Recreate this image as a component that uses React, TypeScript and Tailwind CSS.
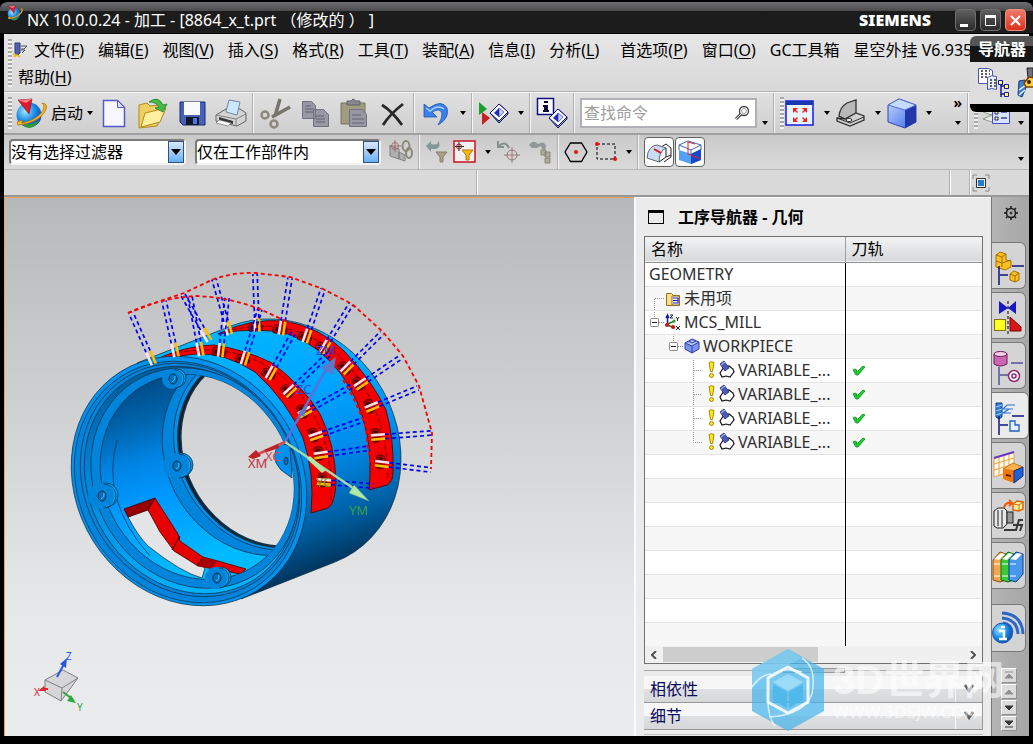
import type { ReactNode } from 'react';

const MENUS: { label: string; hotkey?: string; spaced?: boolean }[] = [
  { label: '文件', hotkey: 'F' },
  { label: '编辑', hotkey: 'E' },
  { label: '视图', hotkey: 'V' },
  { label: '插入', hotkey: 'S' },
  { label: '格式', hotkey: 'R' },
  { label: '工具', hotkey: 'T' },
  { label: '装配', hotkey: 'A' },
  { label: '信息', hotkey: 'I' },
  { label: '分析', hotkey: 'L' },
  { label: '首选项', hotkey: 'P', spaced: true },
  { label: '窗口', hotkey: 'O' },
  { label: 'GC工具箱' },
  { label: '星空外挂 V6.935' },
];

function MenuItem({ label, hotkey, spaced }: { label: string; hotkey?: string; spaced?: boolean }) {
  return (
    <button type="button" className={spaced ? 'ml-[7px] shrink-0 whitespace-nowrap' : 'shrink-0 whitespace-nowrap'}>
      {label}
      {hotkey && (
        <>
          (<span className="underline underline-offset-2">{hotkey}</span>)
        </>
      )}
    </button>
  );
}

/* ---------- small toolbar parts ---------- */

function Grip({ tall }: { tall?: boolean }) {
  return (
    <span
      className={
        tall
          ? 'h-12 w-1 shrink-0 bg-[repeating-linear-gradient(to_bottom,#a8a8a8_0_2px,#f2f2f2_2px_4px)]'
          : 'h-8 w-1 shrink-0 bg-[repeating-linear-gradient(to_bottom,#a8a8a8_0_2px,#f2f2f2_2px_4px)]'
      }
    />
  );
}

function Sep() {
  return <span className="mx-[5px] w-[2px] shrink-0 self-stretch border-l border-[#b0b0b0] bg-[#f6f6f6]" />;
}

function Caret({ low }: { low?: boolean }) {
  return (
    <button type="button" aria-label="更多" className={low ? 'ml-[5px] shrink-0 self-end pb-2' : 'ml-2 shrink-0'}>
      <svg width="6" height="4" viewBox="0 0 6 4">
        <path d="M0 0h6L3 4z" fill="#000" />
      </svg>
    </button>
  );
}

function Tool({ title, small, children }: { title: string; small?: boolean; children: ReactNode }) {
  return (
    <button type="button" aria-label={title} className="shrink-0">
      <svg className={small ? 'block h-6 w-6' : 'block h-8 w-8'} viewBox={small ? '0 0 24 24' : '0 0 32 32'}>
        {children}
      </svg>
    </button>
  );
}

function NxLogo() {
  return (
    <>
      <circle cx="14" cy="18" r="12.5" fill="url(#globe)" />
      <path d="M6 24q8 7 18-1-3 7-10 8-6-1-8-7z" fill="#2f9c34" />
      <path d="M27 6q8 1 2 10-7 10-26 12l-1-3 5-2v3q14-3 20-11 4-6 0-9z" fill="#f8b820" stroke="#a86a08" strokeWidth=".7" />
      <path d="M3 3l14-1-3 15z" fill="#e01830" stroke="#8c0a18" strokeWidth=".6" />
      <path d="M3 3l14-1-6 4z" fill="#ff8080" />
    </>
  );
}

function Diamond({ x, y }: { x: number; y: number }) {
  return (
    <g transform={`translate(${x} ${y})`} strokeLinejoin="round">
      <path d="M0 9L9 0l9 8v2l-9 9z" fill="#9aa0b0" stroke="#101060" />
      <path d="M0 9L9 0l9 8-9 9z" fill="#f4f8ff" stroke="#101060" />
      <path d="M4 9l5-5v9z" fill="#2828c0" />
      <path d="M14 8L9 4v9z" fill="#c8d0f0" stroke="#2828c0" strokeWidth=".6" />
    </g>
  );
}

/* ---------- part shown in the graphics window ---------- */

// base x, base y, tip x, tip y of every drilling move
const FRONT_MOVES = [
  [151, 358, 131, 313],
  [175, 350, 164, 301],
  [200, 349, 190, 297],
  [221, 350, 227, 298],
  [245, 358, 260, 309],
  [271, 373, 295, 330],
  [290, 391, 331, 352],
  [305, 412, 352, 386],
  [316, 436, 363, 420],
  [321, 455, 370, 448],
  [324, 482, 374, 486],
];

const BACK_MOVES = [
  [206, 335, 183, 295],
  [228, 328, 214, 279],
  [257, 325, 255, 274],
  [282, 328, 290, 278],
  [307, 336, 323, 289],
  [325, 347, 351, 304],
  [347, 368, 382, 333],
  [361, 384, 401, 357],
  [372, 407, 418, 388],
  [378, 437, 431, 433],
  [382, 464, 431, 470],
];

function Move({ move, pocket }: { move: number[]; pocket: boolean }) {
  const [bx, by, tx, ty] = move;
  const len = Math.hypot(tx - bx, ty - by);
  const ux = (tx - bx) / len;
  const uy = (ty - by) / len;
  const px = -uy * 2.2;
  const py = ux * 2.2;
  const ax = bx + ux * 7;
  const ay = by + uy * 7;
  const cx = bx - ux * 7;
  const cy = by - uy * 7;
  const angle = (Math.atan2(uy, ux) * 180) / Math.PI;
  return (
    <g>
      {pocket && (
        <g transform={`translate(${bx} ${by}) rotate(${angle})`}>
          <path d="M-6-8q5-2 8 1l1 10q-5 4-9 1z" fill="#b80000" stroke="#300" strokeWidth=".7" />
          <path d="M-4-7l4 1v4l-4-1zM-4 0l4 1-1 4-3-1z" fill="#480808" />
        </g>
      )}
      <path
        d={`M${ax + px} ${ay + py}L${tx + px} ${ty + py}M${ax - px} ${ay - py}L${tx - px} ${ty - py}`}
        stroke="#0000f5"
        strokeWidth="1.7"
        strokeDasharray="4 3"
      />
      <path d={`M${ax + px} ${ay + py}L${cx + px} ${cy + py}`} stroke="#ffbe00" strokeWidth="2.6" />
      <path d={`M${ax - px} ${ay - py}L${cx - px} ${cy - py}`} stroke="#ffe2ee" strokeWidth="2.6" />
    </g>
  );
}

// every circle of the part is seen as an ellipse turned by the same angle
const TILT = 58;

function ellipsePath(cx: number, cy: number, rx: number, ry: number) {
  const dx = rx * Math.cos((TILT * Math.PI) / 180);
  const dy = rx * Math.sin((TILT * Math.PI) / 180);
  return `M${cx - dx} ${cy - dy}A${rx} ${ry} ${TILT} 1 1 ${cx + dx} ${cy + dy}A${rx} ${ry} ${TILT} 1 1 ${cx - dx} ${cy - dy}z`;
}

function Ring({ cx, cy, rx, ry, fill, width = 0.8 }: { cx: number; cy: number; rx: number; ry: number; fill: string; width?: number }) {
  return <path d={ellipsePath(cx, cy, rx, ry)} fill={fill} stroke="#16344c" strokeWidth={width} />;
}

function Boss({ x, y, r }: { x: number; y: number; r: number }) {
  return (
    <g>
      <circle cx={x + 4} cy={y - 1} r={r} fill="#00a2f8" stroke="#16344c" strokeWidth=".8" />
      <circle cx={x - 1} cy={y} r={r + 1} fill="#0084dc" />
      <path d={`M${x + 2} ${y - r}a${r} ${r} 0 0 1 0 ${2 * r}`} stroke="#16344c" strokeWidth=".8" />
      <ellipse cx={x} cy={y} rx="4" ry="5" fill="#0070c0" stroke="#102c40" />
      <path d={`M${x - 1} ${y + 3}q4-2 3-6`} stroke="#40c4ff" fill="none" />
    </g>
  );
}

function PartView() {
  return (
    <svg
      className="block min-h-0 min-w-0 flex-1 border-l border-t border-[#f0a25a]"
      viewBox="5 198 629 538"
      preserveAspectRatio="xMidYMid slice"
      fill="none"
      role="img"
      aria-label="8864_x_t"
    >
      <defs>
        <linearGradient id="sky" gradientUnits="userSpaceOnUse" x1="0" y1="198" x2="0" y2="736">
          <stop offset="0" stopColor="#b7b8ba" />
          <stop offset=".4" stopColor="#d0d1d3" />
          <stop offset=".75" stopColor="#e6e7e9" />
          <stop offset="1" stopColor="#ebecee" />
        </linearGradient>
        <linearGradient id="body" gradientUnits="userSpaceOnUse" x1="230" y1="330" x2="320" y2="582">
          <stop offset="0" stopColor="#00b6ff" />
          <stop offset=".3" stopColor="#00a6ff" />
          <stop offset=".55" stopColor="#008cec" />
          <stop offset=".78" stopColor="#0062a8" />
          <stop offset="1" stopColor="#002a4c" />
        </linearGradient>
        <linearGradient id="bore" gradientUnits="userSpaceOnUse" x1="140" y1="380" x2="195" y2="560">
          <stop offset="0" stopColor="#004a84" />
          <stop offset=".2" stopColor="#0062aa" />
          <stop offset=".4" stopColor="#0082e0" />
          <stop offset=".62" stopColor="#0098ff" />
          <stop offset="1" stopColor="#00baff" />
        </linearGradient>
        <linearGradient id="groove" gradientUnits="userSpaceOnUse" x1="150" y1="380" x2="190" y2="600">
          <stop offset="0" stopColor="#0060a0" />
          <stop offset=".35" stopColor="#0082da" />
          <stop offset="1" stopColor="#00b4ff" />
        </linearGradient>
        <clipPath id="boreClip">
          <path d={ellipsePath(197, 477, 106, 93)} />
        </clipPath>
      </defs>
      <rect x="-600" y="198" width="2000" height="538" fill="url(#sky)" />

      {/* outer skin */}
      <path
        d="M137 363L231 326A129 113 58 0 1 335 562L241 599z"
        fill="url(#body)"
        stroke="#16344c"
        strokeWidth=".8"
      />
      <path
        d="M218 334Q250 318 284 321 320 327 344 351 372 380 386 410 394 438 393 472 393 482 387 485L369 490Q372 460 367 434 360 400 341 374 318 344 288 334 256 326 218 334z"
        fill="#f50000"
        stroke="#501010"
      />
      <path d="M232 330Q290 316 336 353 386 398 388 478" stroke="#7a0000" strokeDasharray="5 2" />
      <path
        d="M150 362Q186 345 214 345 246 350 272 363 303 386 320 414 335 444 336 482 335 504 328 508L311 513Q315 474 303 438 288 402 255 372 224 352 196 354 176 356 150 362z"
        fill="#f50000"
        stroke="#501010"
      />
      <path d="M170 354Q244 338 293 386 334 430 331 500" stroke="#7a0000" strokeDasharray="5 2" />

      {/* front flange */}
      <Ring cx={189} cy={481} rx={129} ry={113} fill="#0092f0" />
      <Ring cx={188} cy={482} rx={125} ry={109} fill="#0084dc" />
      <Ring cx={190} cy={480} rx={121} ry={105} fill="#0084dc" />
      <Ring cx={191} cy={480} rx={118} ry={102} fill="url(#groove)" />
      <Ring cx={195} cy={478} rx={114} ry={100} fill="#0084dc" />
      <Ring cx={197} cy={477} rx={106} ry={93} fill="url(#bore)" />

      {/* inside of the bore */}
      <g clipPath="url(#boreClip)">
        <path d="M117 440Q100 500 150 556" stroke="#06385c" strokeWidth=".8" />
        <Ring cx={260} cy={452} rx={107} ry={94} fill="#0084dc" />
        <Ring cx={267} cy={450} rx={104} ry={89} fill="#0092e8" />
        <Ring cx={269} cy={450} rx={101} ry={87} fill="#081828" width={1.5} />
        <Ring cx={271} cy={450} rx={100} ry={86} fill="url(#sky)" width={1.5} />
        <path
          d="M128 517L148 509 176 551 205 568 202 578Q182 573 148 546 138 536 128 517z"
          fill="#e4e5e7"
          stroke="#16344c"
          strokeWidth=".8"
        />
        <path d="M124 509L155 498 148 510 128 517z" fill="#980000" stroke="#400" strokeWidth=".8" />
        <path
          d="M155 498L178 534 180 541 203 557 218 561 246 569 240 574 210 568 198 566 174 551 160 532 148 510z"
          fill="#e60000"
          stroke="#400"
          strokeWidth=".8"
        />
        <path d="M203 557l14 4-6 8-13-3z" fill="#a80000" />
        <path d="M180 536l-8 14M203 557l-6 9" stroke="#400" />
      </g>
      <Boss x={173} y={379} r={9} />
      <Boss x={102} y={496} r={12} />
      <Boss x={177} y={466} r={12} />
      <Boss x={217} y={578} r={10} />
      <path d="M281 443Q268 456 281 470L292 478 290 446z" fill="#0090f0" stroke="#16344c" strokeWidth=".8" />
      <ellipse cx="286" cy="461" rx="2" ry="4" fill="#0070c0" stroke="#16344c" />

      {/* tool path */}
      {BACK_MOVES.map((move, i) => (
        <Move key={i} move={move} pocket={i > 1} />
      ))}
      {FRONT_MOVES.map((move, i) => (
        <Move key={i} move={move} pocket={i > 2} />
      ))}
      <g stroke="#f80000" strokeWidth="1.8" strokeDasharray="4 3">
        <path d="M128 313L160 301 184 293 214 279Q234 272 256 273L290 277 323 289 352 304 383 332 403 356 419 386 432 433 431 469" />
        <path d="M128 313Q160 298 196 296 230 297 262 310L292 324" />
        <path d="M343 380L353 397 365 424 368 448 375 485" />
      </g>

      {/* work coordinate system */}
      <path d="M285 442L327 368" stroke="#5c70d8" strokeWidth="2.5" />
      <path d="M336 357l-3 18-12-7z" fill="#5c78c8" />
      <path d="M308 404l-4 13-6-4z" fill="#5c78c8" />
      <path d="M285 442L356 490" stroke="#a4d8a8" strokeWidth="2.5" />
      <path d="M310 456l16 14-4 3-15-14z" fill="#b0e8a8" />
      <path d="M369 501l-20-8 5-8z" fill="#b0e8a8" stroke="#70a870" strokeWidth=".5" />
      <path d="M285 442L256 455" stroke="#d84850" strokeWidth="2.5" />
      <path d="M248 457l8-7 5 6-8 3zM264 450l14-6 1 4-12 4z" fill="#c02028" />
      <g fontFamily='"Noto Sans", sans-serif' fontSize="13">
        <text x="248" y="468" fill="#c43238">XM</text>
        <text x="265" y="461" fill="#d84850">XC</text>
        <text x="349" y="515" fill="#38a040">YM</text>
        <text x="316" y="487" fill="#789018">YC</text>
        <text x="296" y="394" fill="#2a50e0">ZC</text>
        <text x="316" y="355" fill="#3838d8">ZM</text>
      </g>

      {/* view triad */}
      <path d="M45 680l18-10 15 8-17 23-16-9z" fill="#d6d6d8" stroke="#808084" />
      <path d="M45 680l17 8 16-10M62 688l-1 13" stroke="#808084" />
      <path d="M57 677l7-13" stroke="#2858e0" strokeWidth="2" />
      <path d="M67 658l-1 10-6-4z" fill="#2858e0" />
      <path d="M63 692l8 6" stroke="#30a840" strokeWidth="2" />
      <path d="M76 703l-9-2 4-6z" fill="#30a840" />
      <path d="M48 689h-5" stroke="#d82830" strokeWidth="2" />
      <path d="M38 691l6-5 2 5z" fill="#d82830" />
      <g fontFamily='"Noto Sans", sans-serif' fontSize="10">
        <text x="66" y="660" fill="#2858e0">Z</text>
        <text x="77" y="711" fill="#30a840">Y</text>
        <text x="34" y="696" fill="#d82830">X</text>
      </g>
    </svg>
  );
}

/* ---------- operation navigator ---------- */

type Row = { kind: 'root' | 'folder' | 'mcs' | 'workpiece' | 'op' | 'blank'; name: string; last?: boolean };

const ROWS: Row[] = [
  { kind: 'root', name: 'GEOMETRY' },
  { kind: 'folder', name: '未用项' },
  { kind: 'mcs', name: 'MCS_MILL' },
  { kind: 'workpiece', name: 'WORKPIECE' },
  { kind: 'op', name: 'VARIABLE_...' },
  { kind: 'op', name: 'VARIABLE_...' },
  { kind: 'op', name: 'VARIABLE_...' },
  { kind: 'op', name: 'VARIABLE_...', last: true },
  ...Array.from({ length: 8 }, (): Row => ({ kind: 'blank', name: '' })),
];

function TreeIcon({ kind, last }: { kind: Row['kind']; last?: boolean }) {
  const dots = { stroke: '#909090', strokeDasharray: '1 1', fill: 'none' };
  if (kind === 'folder') {
    return (
      <svg width="39" height="24" className="shrink-0">
        <path d="M9.5 24V12.500H20" {...dots} />
        <path d="M21.500 7.500h5l2 2h6v10h-13z" fill="#f8e080" stroke="#907020" />
        <path d="M27 10h7v9h-7z" fill="#fff" stroke="#907020" />
        <path d="M28 12h5M28 14.500h5M28 17h5M33 12v5" stroke="#1818c0" />
      </svg>
    );
  }
  if (kind === 'mcs') {
    return (
      <svg width="39" height="24" className="shrink-0">
        <path d="M9.500 0V8M14 12.500h5" {...dots} />
        <rect x="5.500" y="8.500" width="8" height="8" rx="1" fill="#fff" stroke="#888" />
        <path d="M7 12.500h5" stroke="#222" />
        <path d="M22.500 15V6M21 8l1.500-3L24 8" stroke="#1020b0" strokeWidth="1.500" fill="none" />
        <path d="M22 14l8-3M22 15l8 3" stroke="#208020" strokeWidth="1.500" />
        <circle cx="22" cy="15" r="2" fill="#d81010" />
        <circle cx="28" cy="17" r="2" fill="#d81010" />
        <path d="M25 5h3l-3 3h3M31 7l1.500 2L34 7M32.500 9v2M31 16l4 4M35 16l-4 4" stroke="#222" fill="none" />
        <circle cx="29" cy="11" r="1.500" fill="#20a020" />
      </svg>
    );
  }
  if (kind === 'workpiece') {
    return (
      <svg width="58" height="24" className="shrink-0">
        <path d="M28.500 0V8M33 12.500h6" {...dots} />
        <rect x="24.500" y="8.500" width="8" height="8" rx="1" fill="#fff" stroke="#888" />
        <path d="M26 12.500h5" stroke="#222" />
        <path d="M40 9l7-4 7 3v7l-7 4-7-4z" fill="#7c94f0" stroke="#3040a8" />
        <path d="M40 9l7 3 7-4M47 12v7M44 7l3 2 4-2" stroke="#3040a8" fill="#b8c8ff" />
      </svg>
    );
  }
  if (kind === 'op') {
    return (
      <svg width="93" height="24" className="shrink-0">
        <path d={last ? 'M48.500 0V12.500H57' : 'M48.500 0V24M49 12.500H57'} {...dots} />
        <path d="M64 4.500q2.500-1.500 5 0l-1.500 9h-2z" fill="#ffe820" stroke="#a88808" />
        <circle cx="66.500" cy="17.500" r="2" fill="#ffe820" stroke="#a88808" />
        <path d="M79 9l5-1 4 3 1 3-4 5-4-1-4 1-2-4z" fill="#fff" stroke="#111" strokeWidth="1.200" />
        <path d="M75 6l4-3 5 7-4 3z" fill="#4c5cb8" stroke="#182060" strokeWidth=".7" />
        <path d="M76 7l4-3" stroke="#c0c8f0" />
      </svg>
    );
  }
  return <span className="w-1 shrink-0" />;
}

function Navigator() {
  return (
    <section className="flex w-[357px] shrink-0 flex-col border-l-2 border-t border-[#fafafa] bg-[#ebebeb] pl-2 pr-2">
      <h2 className="flex h-[38px] items-center gap-[14px] pl-1 font-bold">
        <span className="h-[14px] w-4 border border-t-[3px] border-black" />
        工序导航器 - 几何
      </h2>
      <div className="flex min-h-0 flex-1 flex-col overflow-hidden border border-[#707070] bg-[#f0f0f0]">
        <div className="min-h-0 flex-1 overflow-hidden">
          <table className="w-full table-fixed border-collapse">
            <thead>
              <tr className="h-[25px] border-b border-[#909090] bg-linear-to-b from-[#f2f3f3] to-[#d6d8da]">
                <th className="w-[200px] border-r border-[#a0a0a0] p-0 pl-[6px] text-left font-normal leading-6">名称</th>
                <th className="p-0 pl-[6px] text-left font-normal leading-6">刀轨</th>
              </tr>
            </thead>
            <tbody className="text-[#303030]">
              {ROWS.map((row, i) => (
                <tr key={i} className="h-6 border-b border-[#e4e4e4] odd:bg-white even:bg-[#f7f7f7]">
                  <td className="border-r border-black p-0">
                    <div className="flex h-[23px] items-center overflow-hidden whitespace-nowrap">
                      <TreeIcon kind={row.kind} last={row.last} />
                      {row.name}
                    </div>
                  </td>
                  <td className="p-0 pl-[6px]">
                    {row.kind === 'op' && (
                      <svg width="13" height="13" viewBox="0 0 13 13" className="block" aria-label="完成">
                        <path d="M1 6l3-1 1 3 6-6 2 1-7 8H4z" fill="#18d030" stroke="#089018" strokeWidth=".8" />
                      </svg>
                    )}
                  </td>
                </tr>
              ))}
            </tbody>
          </table>
        </div>
        <div className="flex h-[17px] shrink-0 items-center px-[6px]">
          <svg width="6" height="8" viewBox="0 0 6 8" className="mr-[6px]">
            <path d="M5 0L1 4l4 4" stroke="#505050" strokeWidth="2" fill="none" />
          </svg>
          <span className="h-[15px] w-[155px] bg-[#cdcdcd]" />
          <svg width="6" height="8" viewBox="0 0 6 8" className="ml-auto">
            <path d="M1 0l4 4-4 4" stroke="#505050" strokeWidth="2" fill="none" />
          </svg>
        </div>
      </div>
      <div className="flex h-3 items-center justify-center">
        <span className="h-px flex-1 bg-[#a8a8a8]" />
        <span className="h-[5px] w-[62px] border border-[#999] bg-[#ccc]" />
        <span className="h-px flex-1 bg-[#a8a8a8]" />
      </div>
      {['相依性', '细节'].map((name) => (
        <button
          key={name}
          type="button"
          className="flex h-[27px] items-center border-b border-r border-[#999] bg-[linear-gradient(#f7f7f7_50%,#dfe0e2_50%,#d6d7d9)] pl-[6px] text-[#08085c]"
        >
          {name}
          <span className="ml-auto flex w-[27px] justify-center self-stretch border-l border-[#f8f8f8]">
            <svg width="10" height="26" viewBox="0 0 10 26">
              <path d="M1 9l4 6 4-6" stroke="#606060" strokeWidth="2.500" fill="none" />
            </svg>
          </span>
        </button>
      ))}
      <span className="mb-px mt-1 h-px bg-[#c0c0c0]" />
    </section>
  );
}

/* ---------- resource bar ---------- */

const TREE = <path d="M7 23v19M8 32h8M20 23h12" stroke="#101080" strokeWidth="1.500" fill="none" />;

const TABS: { name: string; icon: ReactNode }[] = [
  {
    name: '装配导航器',
    icon: (
      <>
        <path d="M4 12l4-3 6 2v6l5 1v6l-6 3-9-3z" fill="#f8c020" stroke="#a87000" />
        <path d="M4 12l6 2 4-3M10 14v10M4 18l6 2 9-3" stroke="#a87000" fill="none" />
        {TREE}
        <path d="M18 31l4-3 5 2v7l-4 2-5-2z" fill="#f8c020" stroke="#a87000" />
        <path d="M18 31l5 2 4-3M23 33v6" stroke="#a87000" fill="none" />
      </>
    ),
  },
  {
    name: '约束导航器',
    icon: (
      <>
        <path d="M7 8l9 7-9 6zM24 8l-8 7 8 6z" fill="#1818c8" />
        <path d="M16 8v34" stroke="#000" strokeDasharray="3 2" />
        <rect x="2.500" y="26.500" width="11" height="11" fill="#ffff20" stroke="#887000" />
        <path d="M18 24l11 10v4H18z" fill="#d81818" stroke="#700" />
      </>
    ),
  },
  {
    name: '部件导航器',
    icon: (
      <>
        <path d="M2 11v10q6 4 13 0V11z" fill="#c868b0" stroke="#701860" />
        <ellipse cx="8.500" cy="11" rx="6.500" ry="2.500" fill="#f0d0e8" stroke="#701860" />
        <path d="M7 24v18M8 32h8M19 20h12" stroke="#101080" fill="none" />
        <circle cx="22" cy="33" r="5.500" fill="#fff" stroke="#902878" strokeWidth="1.500" />
        <circle cx="22" cy="33" r="2" fill="none" stroke="#902878" strokeWidth="1.500" />
      </>
    ),
  },
  {
    name: '工序导航器',
    icon: (
      <>
        <path d="M4 10h6v14l-3 2-3-2z" fill="#3080d8" stroke="#104080" />
        <path d="M4 14l6-2M4 18l6-2M4 22l6-2" stroke="#a0d0ff" />
        <path d="M23 12h-8l-4 4h10M17 16l-6 4h8" stroke="#2870d8" strokeWidth="1.200" fill="none" />
        {TREE}
        <path d="M18 28h5v4h4v6h-9z" fill="#e8f0ff" stroke="#2060c0" strokeWidth="1.300" />
      </>
    ),
  },
  {
    name: '机床导航器',
    icon: (
      <>
        <path d="M2 15l20-6v18L2 34zM2 21l20-6M2 27l20-6M7 14v18M12 12v19M17 11v18" fill="#fff8e8" stroke="#e8a040" />
        <path d="M2 15l20-6" stroke="#6838c0" strokeWidth="2" />
        <path d="M11 26l10-6 10 4-9 4z" fill="#ffb048" stroke="#904800" strokeWidth=".6" />
        <path d="M11 26l11 2v12l-11-4z" fill="#f07808" />
        <path d="M22 28l9-4v9l-9 7z" fill="#2060d8" stroke="#103080" />
        <path d="M14 31l5 1v2l-5-1z" fill="#602000" />
      </>
    ),
  },
  {
    name: '加工特征导航器',
    icon: (
      <>
        <path d="M2 18l4-3h6l3 3v13l-4 4H5l-3-2z" fill="#e8e8e8" stroke="#202020" />
        <path d="M6 17v16M10 17v17" stroke="#606060" strokeWidth="1.500" />
        <rect x="15" y="19" width="6" height="11" fill="#989898" stroke="#202020" />
        <path d="M12 37h12l3-10h4M21 32h9l-2 6" stroke="#383838" strokeWidth="2" fill="none" />
        <path d="M12 15q1-6 8-5l-3-3M20 10l-3 3" stroke="#f05808" strokeWidth="2" fill="none" />
        <path d="M21 11l4-3 6 1v7l-4 2-6-1z" fill="#fff0a0" stroke="#d86800" strokeWidth="1.500" />
        <path d="M21 11l6 1 4-3M27 12v6" stroke="#d86800" fill="none" />
      </>
    ),
  },
  {
    name: '重用库',
    icon: (
      <>
        <path d="M1 17l7-8 6 2v26l-6 2-7-2z" fill="#f0a850" stroke="#904800" />
        <path d="M9 17l7-8 6 2v26l-6 2-7-2z" fill="#38c838" stroke="#087018" />
        <path d="M17 17l7-8 7 2v20l-7 8-7-2z" fill="#4898f0" stroke="#103c90" />
        <path d="M2 16l7-6 4 1-6 6zM10 16l7-6 4 1-6 6zM18 16l7-6 5 1-6 6z" fill="#fff" />
        <path d="M2 21h6M2 33h6M10 21h6M10 33h6M18 21h6M18 33h6" stroke="#fff" />
      </>
    ),
  },
];

function ResourceBar() {
  const tab = 'mb-[3px] h-[47px] w-[34px] shrink-0 rounded-r-md border border-l-0 border-[#787878] bg-[#d4d4d4]';
  const active = 'mb-[3px] h-[47px] w-[37px] shrink-0 rounded-r-md border border-l-0 border-[#787878] bg-[#ebebeb]';
  return (
    <nav className="flex w-[38px] shrink-0 flex-col border-l border-[#787878] bg-linear-to-r from-[#b4b4b4] to-[#a6a6a6]">
      <button type="button" aria-label="资源条选项" className="mb-[13px] flex h-8 items-center pl-3">
        <svg width="14" height="14" viewBox="0 0 14 14" fill="none" stroke="#181818">
          <circle cx="7" cy="7" r="4.500" strokeWidth="1.500" />
          <circle cx="7" cy="7" r="1" />
          <path d="M7 0v2M7 12v2M0 7h2M12 7h2M2 2l1.500 1.500M10.500 10.500L12 12M12 2l-1.500 1.500M3.500 10.500L2 12" strokeWidth="1.500" />
        </svg>
      </button>
      {TABS.map(({ name, icon }) => (
        <button key={name} type="button" aria-label={name} className={name === '工序导航器' ? active : tab}>
          <svg width="33" height="45" viewBox="0 0 33 45">
            {icon}
          </svg>
        </button>
      ))}
      <button type="button" aria-label="信息" className="mb-4 mt-3 h-12 w-[34px] shrink-0 rounded-r-md border border-l-0 border-[#787878] bg-[#d4d4d4]">
        <svg width="33" height="46" viewBox="0 0 33 46" fill="none">
          <path d="M10 8q20 1 21 21M10 13q15 1 16 16M11 18q8 1 9 9" stroke="#2c68c8" strokeWidth="3" />
          <circle cx="10.500" cy="28" r="10" fill="url(#globe)" stroke="#1858b0" />
          <path d="M9 22h4M7 26h5v8M7 34h8" stroke="#fff" strokeWidth="2.500" />
        </svg>
      </button>
      <div className="flex flex-col items-center gap-px pr-1">
        {['M3 3h8M3 9l4-4 4 4z', 'M3 9l4-4 4 4z', 'M3 5l4 4 4-4z', 'M3 4l4 4 4-4zM3 10h8'].map((d, i) => (
          <button key={d} type="button" aria-label="滚动" className="h-[15px] w-4 border border-[#909090] border-l-white border-t-white bg-[#dcdcdc]">
            <svg width="14" height="13" viewBox="0 0 14 13" className={i < 2 ? 'text-[#909090]' : 'text-[#383838]'}>
              <path d={d} fill="currentColor" stroke="currentColor" />
            </svg>
          </button>
        ))}
      </div>
    </nav>
  );
}

function FilterSelect({ label, wide }: { label: string; wide?: boolean }) {
  return (
    <label className={wide ? 'relative ml-[9px] w-[186px] shrink-0' : 'relative w-[177px] shrink-0'}>
      <select
        aria-label={label}
        className="block h-[26px] w-full appearance-none rounded-sm border-2 border-[#7a7a7a] border-b-[#f4f4f4] border-r-[#f4f4f4] bg-white text-base leading-5 text-black"
      >
        <option>{label}</option>
      </select>
      <span className="pointer-events-none absolute bottom-[2px] right-[2px] top-[2px] flex w-4 items-center justify-center border border-[#305080] bg-linear-to-b from-[#d8e8fc] to-[#68b0f4]">
        <svg width="10" height="6" viewBox="0 0 10 6">
          <path d="M0 0h10L5 6z" fill="#000" />
        </svg>
      </span>
    </label>
  );
}

function NavigatorPalette() {
  return (
    <aside className="absolute right-0 top-9 w-[63px] overflow-hidden rounded-l-md border-b-8 border-black bg-[#dedede]">
      <div className="h-[26px] overflow-hidden whitespace-nowrap bg-[linear-gradient(#555_40%,#151515_40%)] pl-2 font-bold leading-[26px] text-white">
        导航器
      </div>
      <svg width="63" height="42" viewBox="0 0 63 42" fill="none">
        <path d="M8.500 6.500h10l4 2v13h-14z" fill="#fff" stroke="#4858a8" />
        <path d="M17.500 15.500q4-3 9-1v13q-5-2-9 0z" fill="#e8ecff" stroke="#4858a8" />
        <path d="M11 9h9M11 12h9M11 15h6M20 18h6M20 21h6M20 24h6" stroke="#303030" strokeWidth="1.500" strokeDasharray="2 2" />
        <path d="M31 20v15M31 24h5M31 32h5" stroke="#1818a0" strokeWidth="1.500" />
        <path d="M28.500 18.500h4v4h-4zM34.500 22.500h4v4h-4zM34.500 30.500h4v4h-4z" fill="#ffff60" stroke="#1818a0" />
        <path d="M57 6h6v10h-5z" fill="#707078" stroke="#202020" />
        <path d="M49 19l6-1 2 5-5 12-4-2z" fill="#4080d0" stroke="#183868" />
        <path d="M49 28l7-5M49 33l6-5" stroke="#e0f0ff" strokeWidth="1.500" />
        <path d="M54 21l5-6 5 1v9h-8z" fill="#ffd040" stroke="#804000" strokeWidth="1.500" />
        <circle cx="59" cy="20" r="2" fill="#402000" />
      </svg>
    </aside>
  );
}

function Watermark() {
  return (
    <div className="pointer-events-none absolute bottom-3 right-4 flex items-center gap-2 whitespace-nowrap">
      <svg width="74" height="84" viewBox="0 0 74 84" fill="none">
        <path d="M37 1l36 20v42L37 83 1 63V21z" fill="#46b4ea" fillOpacity=".72" />
        <path d="M37 1l14 9-36 18L1 40V21z" fill="#8cd4f4" fillOpacity=".6" />
        <path d="M37 19l20 11v24L37 65 17 54V30z" stroke="#fff" strokeOpacity=".85" strokeWidth="3" />
        <path d="M51 10q15 9 10 36-8 21-43 23M17 31q10-14 34-7M17 53q0 16 7 25M1 39q8-12 19-13" stroke="#fff" strokeOpacity=".7" strokeWidth="1.500" />
        <path d="M37 26l15 8-15 9-15-9z" fill="#9adcf8" />
        <path d="M22 36l14 8v16l-14-8zM52 36l-14 8v16l14-8z" fill="#50b8ea" />
      </svg>
      <div className="w-[184px] text-white/60">
        <p className='font-["Liberation_Sans","Noto_Sans_CJK_SC",sans-serif] text-[40px] font-bold leading-[46px]'>3D世界网</p>
        <p className='font-["DejaVu_Sans",sans-serif] text-base leading-5'>WWW.3DSJW.COM</p>
      </div>
    </div>
  );
}

export default function App() {
  return (
    <div className='relative flex h-screen flex-col overflow-hidden bg-black px-1 pb-2 font-["Noto_Sans","Noto_Sans_CJK_SC",sans-serif] text-base leading-6 text-black'>
      <svg className="absolute h-0 w-0" aria-hidden="true">
        <defs>
          <radialGradient id="globe" cx=".35" cy=".35" r=".8">
            <stop offset="0" stopColor="#a0e8ff" />
            <stop offset=".5" stopColor="#1888e8" />
            <stop offset="1" stopColor="#0838a0" />
          </radialGradient>
          <linearGradient id="cube" x1="0" y1="0" x2="1" y2="1">
            <stop offset="0" stopColor="#c8d8ff" />
            <stop offset="1" stopColor="#3868e8" />
          </linearGradient>
        </defs>
      </svg>

      <header className="-mx-1 flex h-[34px] shrink-0 items-center rounded-t-lg border-b border-t-2 border-black bg-[linear-gradient(#6c6c70_0_1px,#4a4a4c_9px,#1c1c1c_9px)] pl-[7px] pr-[7px] text-white">
        <svg width="16" height="18" viewBox="0 0 32 36" className="mb-2 mr-1">
          <NxLogo />
        </svg>
        <h1 className="whitespace-pre pt-1">NX 10.0.0.24 - 加工 - [8864_x_t.prt （修改的 ） ]</h1>
        <span className="ml-auto mr-6 pt-1 font-black">SIEMENS</span>
        <div className="flex gap-1 pt-1">
          <button type="button" aria-label="最小化" className="h-[22px] w-[21px] rounded border border-[#707070] bg-linear-to-b from-[#606060] to-[#2c2c2c]">
            <svg width="19" height="20" viewBox="0 0 19 20">
              <path d="M4 14h8v3H4z" fill="#fff" />
            </svg>
          </button>
          <button type="button" aria-label="最大化" className="h-[22px] w-[21px] rounded border border-[#707070] bg-linear-to-b from-[#606060] to-[#2c2c2c]">
            <svg width="19" height="20" viewBox="0 0 19 20">
              <path d="M4.500 6v9.500h10V6M4 6h11" stroke="#fff" fill="none" />
              <path d="M4 5h11v3H4z" fill="#fff" />
            </svg>
          </button>
          <button type="button" aria-label="关闭" className="h-[22px] w-[21px] rounded border border-[#f09080] bg-linear-to-b from-[#f07868] to-[#d83018]">
            <svg width="19" height="20" viewBox="0 0 19 20">
              <path d="M5 6l9 9M14 6l-9 9" stroke="#fff" strokeWidth="2" />
            </svg>
          </button>
        </div>
      </header>

      <nav className="flex h-[58px] shrink-0 items-center border-b border-[#b4b4b4] bg-linear-to-b from-[#e6e6e6] to-[#d8d8d8] pl-1">
        <Grip tall />
        <div className="min-w-0 flex-1 overflow-hidden">
          <div className="flex h-7 items-center gap-[14px]">
            <svg width="16" height="16" viewBox="0 0 16 16" className="-mr-2 shrink-0">
              <path d="M3 1h5v10l-2 2-3-2z" fill="#5060b0" stroke="#303878" />
              <path d="M9 4h6l-3 3H9M9 8h4l-3 3" stroke="#505050" fill="none" />
              <path d="M1 12l3 1M2 15l3-2 3 2" stroke="#e0b810" strokeWidth="1.500" fill="none" />
            </svg>
            {MENUS.map((m) => (
              <MenuItem key={m.label} {...m} />
            ))}
          </div>
          <div className="flex h-[26px] items-center pl-[6px]">
            <MenuItem label="帮助" hotkey="H" />
          </div>
        </div>
      </nav>

      <div className="flex h-[43px] shrink-0 items-center border-b-2 border-[#a0a0a0] border-t border-t-[#f4f4f4] bg-linear-to-b from-[#e0e0e0] to-[#cfcfcf] pl-1">
        <Grip />
        <button type="button" className="ml-[3px] mr-[5px] flex shrink-0 items-center gap-1">
          <svg className="h-8 w-8" viewBox="0 0 32 32">
            <NxLogo />
          </svg>
          启动
          <svg width="6" height="4" viewBox="0 0 6 4">
            <path d="M0 0h6L3 4z" fill="#000" />
          </svg>
        </button>
        <div className="flex gap-[7px]">
          <Tool title="新建">
            <path d="M5.500 3.500h14l7 7v19h-21z" fill="#f6f7ff" stroke="#5858c8" strokeWidth="1.500" />
            <path d="M19.500 3.500v7h7z" fill="#d8dcff" stroke="#5858c8" />
          </Tool>
          <Tool title="打开">
            <path d="M2 8l8-2 3 3 10-1v6l4 1-7 14-18 2z" fill="#f0d060" stroke="#b08820" />
            <path d="M4 30l4-14 21-5-6 14z" fill="#fff0a0" stroke="#b08820" />
            <path d="M12 5q9-7 14 3l4-1-4 8-8-4 4-1q-3-5-10-5z" fill="#48b848" stroke="#187828" strokeWidth=".7" />
          </Tool>
          <Tool title="保存">
            <path d="M4 5h25v23H7l-3-3z" fill="#4860b8" stroke="#182870" />
            <path d="M8 5h16v13H8z" fill="#f8f8ff" />
            <path d="M10 20h13v8H10z" fill="#101828" />
            <path d="M17 21h4v6h-4z" fill="#4878e8" />
          </Tool>
          <Tool title="打印">
            <path d="M1 18l10-6h14l6 4v8l-9 5-21-5z" fill="#d4d4d4" stroke="#606060" />
            <path d="M14 3l11 2-3 13-11-3z" fill="#cce8ff" stroke="#7088a8" />
            <path d="M1 18l20 4 10-5M21 22v7" stroke="#808080" fill="none" />
            <path d="M4 20l14 4v3l-14-4z" fill="#383838" />
            <path d="M4 23l12 3-3 3-12-3z" fill="#fff" stroke="#606060" strokeWidth=".6" />
          </Tool>
        </div>
        <Sep />
        <div className="flex gap-[7px]">
          <Tool title="剪切">
            <path d="M21 2l-5 17M31 10L13 20" stroke="#77746c" strokeWidth="3.500" />
            <circle cx="6" cy="18" r="3.500" fill="none" stroke="#8c887c" strokeWidth="2.500" />
            <circle cx="15" cy="27" r="3.500" fill="none" stroke="#8c887c" strokeWidth="2.500" />
          </Tool>
          <Tool title="复制">
            <path d="M4.500 4.500h9l4 4v13h-13zM15.500 12.500h10l5 5v12h-15z" fill="#9898a4" stroke="#707080" />
            <path d="M7 9h6M7 12h8M7 15h8M18 19h8M18 22h9M18 25h9" stroke="#606070" />
          </Tool>
          <Tool title="粘贴">
            <path d="M4 6h24v21H4z" fill="#a09c80" stroke="#787460" />
            <path d="M10 8V4h4l2-2 3 2h4v4z" fill="#888890" stroke="#606068" />
            <path d="M12.500 12.500h13l4 5v12h-17z" fill="#9898a4" stroke="#707080" />
            <path d="M15 18h9M15 22h12M15 26h12" stroke="#606070" />
          </Tool>
          <Tool title="删除">
            <path d="M6 8q10 6 20 20M27 7Q14 17 7 28" stroke="#282828" strokeWidth="2.800" fill="none" />
          </Tool>
        </div>
        <Sep />
        <Tool title="撤消">
          <path d="M4 7v13h13l-5-5q9-5 10 2 0 5-4 11 12-7 9-17-5-9-18 0z" fill="#3a80e8" stroke="#2058b0" strokeWidth=".8" />
          <path d="M6 11l4 3q8-7 14-2" stroke="#a8d0ff" strokeWidth="1.500" fill="none" />
        </Tool>
        <Caret />
        <Sep />
        <Tool title="命令">
          <path d="M1 5l8 7-8 6z" fill="#18a028" />
          <path d="M4 15l8 6-8 7z" fill="#c82020" />
          <Diamond x={12} y={7} />
        </Tool>
        <Caret />
        <Sep />
        <Tool title="信息">
          <rect x="1.500" y="1.500" width="16" height="16" fill="#fff" stroke="#101080" strokeWidth="1.500" />
          <path d="M8 4h4v2H8zM7 8h5v5h1v2H7v-2h1v-3H7z" fill="#080838" />
          <Diamond x={13} y={12} />
        </Tool>
        <Sep />
        <label className="flex h-[30px] w-[177px] shrink-0 items-center border-2 border-[#b0b0b8] bg-white pl-[2px] pr-1">
          <input aria-label="查找命令" placeholder="查找命令" className="w-full min-w-0 outline-none placeholder:text-[#a0a0a0]" />
          <svg width="18" height="18" viewBox="0 0 18 18" className="shrink-0" fill="none" stroke="#404040">
            <circle cx="11" cy="7" r="4.500" strokeWidth="1.300" />
            <circle cx="11" cy="7" r="2.500" stroke="#a0a0a0" />
            <path d="M8 10l-5 5" strokeWidth="3" />
            <path d="M8 10l-5 5" stroke="#fff" />
          </svg>
        </label>
        <Caret low />
        <Sep />
        <Grip />
        <Tool title="适合窗口">
          <path d="M2 4h27v24H2z" fill="#e8f4ff" stroke="#1818e8" strokeWidth="1.500" />
          <path d="M2 4h27v4H2z" fill="#1838b0" />
          <path d="M9 11h5l-2 2 2 2-1 1-2-2-2 2zM23 11h-5l2 2-2 2 1 1 2-2 2 2zM9 25h5l-2-2 2-2-1-1-2 2-2-2zM23 25h-5l2-2-2-2 1-1 2 2 2-2z" fill="#f02010" />
        </Tool>
        <Caret />
        <span className="w-[5px]" />
        <Tool title="定向视图">
          <path d="M4 19q1-9 8-13l9-3v14L10 22z" fill="#b8b8b8" stroke="#303030" strokeWidth="1.300" />
          <path d="M2 21l8 1 11-6 8 3v4L15 29 2 24z" fill="#d0d0d0" stroke="#303030" strokeWidth="1.300" />
          <path d="M2 21l13 5 14-6" stroke="#303030" fill="none" />
          <ellipse cx="14" cy="23" rx="3" ry="1.500" fill="#fff" stroke="#303030" />
        </Tool>
        <Caret />
        <span className="w-[5px]" />
        <Tool title="着色">
          <path d="M2 8l11-6 17 6v17l-11 6-17-6z" fill="url(#cube)" stroke="#3048b0" />
          <path d="M19 13l11-5v17l-11 6z" fill="#2038a8" />
          <path d="M2 8l11-6 17 6-11 5z" fill="#c8dcff" stroke="#5070d8" />
        </Tool>
        <Caret />
        <div className="ml-auto flex h-8 flex-col items-center justify-between">
          <span className="text-sm font-bold leading-3">»</span>
          <svg width="6" height="4" viewBox="0 0 6 4" className="mb-1">
            <path d="M0 0h6L3 4z" fill="#000" />
          </svg>
        </div>
        <Sep />
        <Grip />
        <span className="w-[3px]" />
        <Tool title="资源条">
          <path d="M12 10L2 15l9 3-9 4 9 3" fill="#e8ece8" stroke="#889888" />
          <path d="M11.500 10.500h17v16h-17z" fill="#d8e4ff" stroke="#4848c8" />
          <path d="M14 14h3v3h-3zM14 20h3v3h-3z" fill="#ffff60" stroke="#202080" />
          <path d="M20 15h6M20 21h6" stroke="#404080" strokeWidth="1.500" />
        </Tool>
        <Caret low />
        <span className="w-[5px]" />
      </div>

      <div className="flex h-[35px] shrink-0 items-center border-b border-[#b8b8b8] bg-linear-to-b from-[#cacaca] to-[#dadada] pl-[5px]">
        <FilterSelect label="没有选择过滤器" />
        <FilterSelect label="仅在工作部件内" wide />
        <span className="w-2" />
        <Tool title="整个装配" small>
          <path d="M1 6l9 3v10l-9-3zM10 12l6 3v6l-6-2z" fill="#b0b0b0" stroke="#808080" />
          <path d="M6 0v12M0 6h12" stroke="#a07070" />
          <circle cx="6" cy="6" r="3.500" fill="none" stroke="#a07070" />
          <ellipse cx="17" cy="6" rx="3.500" ry="5" fill="none" stroke="#888878" strokeWidth="2" />
          <ellipse cx="20" cy="13" rx="3" ry="5" fill="none" stroke="#888878" strokeWidth="2" />
        </Tool>
        <Sep />
        <Tool title="重置过滤器" small>
          <path d="M1 6l5-5v3q8 2 7-4 5 10-7 9v3z" fill="#809898" />
          <path d="M11 12h11l-4 5v5h-3v-5z" fill="#a8a088" stroke="#888068" />
        </Tool>
        <span className="w-1" />
        <Tool title="选择过滤器" small>
          <path d="M1 1h21v21H1z" fill="#f0f0f0" stroke="#c81020" strokeWidth="1.500" />
          <path d="M6 2v9M2 6.500h9" stroke="#202020" />
          <circle cx="6" cy="6.500" r="2.500" stroke="#a02020" fill="none" />
          <path d="M9 10h11l-4 5v5h-3v-5z" fill="#f8b818" stroke="#b87800" />
        </Tool>
        <Caret />
        <span className="w-[5px]" />
        <Tool title="捕捉点" small>
          <path d="M2 1v6h6M3 6q6-6 10 2" stroke="#889090" strokeWidth="2" fill="none" />
          <path d="M16 7v16M8 15h16" stroke="#a07878" />
          <circle cx="16" cy="15" r="5" stroke="#907878" fill="none" />
        </Tool>
        <span className="w-2" />
        <Tool title="选择路径" small>
          <path d="M1 5q4-6 9-1 6-4 8 2l-1 4-3-1-1-3-4 2H4z" fill="#909898" />
          <path d="M13 10h5v5h-5zM17 12h5v5h-5zM17 18h5v5h-5z" fill="#b0aca0" stroke="#888478" />
        </Tool>
        <Sep />
        <Tool title="多边形选择" small>
          <path d="M6.500 3h11L23 12l-5.500 9.500h-11L1 12z" fill="none" stroke="#000" strokeWidth="1.300" />
          <circle cx="12" cy="12" r="2" fill="#e81010" />
        </Tool>
        <span className="w-[6px]" />
        <Tool title="矩形选择" small>
          <path d="M3 4h18v15H3z" fill="none" stroke="#000" strokeDasharray="3 2" />
          <circle cx="3" cy="4" r="2" fill="#e81010" />
          <circle cx="21" cy="19" r="2" fill="#e81010" />
        </Tool>
        <Caret />
        <Sep />
        <div className="flex gap-px">
          <button type="button" aria-label="显示隐藏边" className="flex h-[30px] w-[30px] items-center justify-center rounded-sm border border-[#606060] bg-[#fcfcfc]">
            <svg width="26" height="26" viewBox="0 0 26 26" fill="none">
              <path d="M15 8l5-3 5 4v9l-7 5" stroke="#282828" fill="#f4f4f4" />
              <path d="M1 19q1-12 10-13l9 3q-7 3-7 14z" fill="#c8dcf4" stroke="#606870" />
              <path d="M20 9v9M20 18l5-2M13 23l7-5" stroke="#282828" />
              <path d="M8 10l7 4" stroke="#e01010" strokeWidth="2" />
            </svg>
          </button>
          <button type="button" aria-label="半透明着色" className="flex h-[30px] w-[30px] items-center justify-center rounded-sm border border-[#606060] bg-[#fcfcfc]">
            <svg width="26" height="26" viewBox="0 0 26 26" fill="none">
              <path d="M2 11l12 4 10-5v11l-10 4-12-4z" fill="#50a0f8" />
              <path d="M14 15l10-5v11l-10 4z" fill="#1848c8" />
              <path d="M2 6l9-4 13 4-10 5zM2 6v5M24 6v5M14 11v4" stroke="#4068c0" />
              <path d="M11 3v12l13 5M11 3l7 2" stroke="#e02030" />
            </svg>
          </button>
        </div>
        <span className="ml-auto" />
        <Caret low />
        <span className="w-[5px]" />
      </div>

      <div className="flex h-[27px] shrink-0 items-center border-b-2 border-[#989898] bg-[#dadada]">
        <span className="h-full flex-1 border-r border-[#b0b0b0]" />
        <span className="h-full flex-1 border-l border-r border-[#b0b0b0] border-l-white" />
        <span className="h-full w-5 border-l border-r border-[#b0b0b0] border-l-white" />
        <span className="flex h-full w-[59px] items-center border-l border-white pl-px">
          <svg width="18" height="18" viewBox="0 0 18 18" fill="none">
            <path d="M1 5V1h4M13 1h4v4M17 13v4h-4M5 17H1v-4" stroke="#888" />
            <path d="M4.500 4.500h9v9h-9z" fill="#f0f8ff" stroke="#303030" />
            <path d="M6 6h6v6H6z" fill="#2878d0" />
          </svg>
        </span>
      </div>

      <main className="flex min-h-0 flex-1">
        <PartView />
        <Navigator />
        <ResourceBar />
      </main>

      <NavigatorPalette />
      <Watermark />
    </div>
  );
}
